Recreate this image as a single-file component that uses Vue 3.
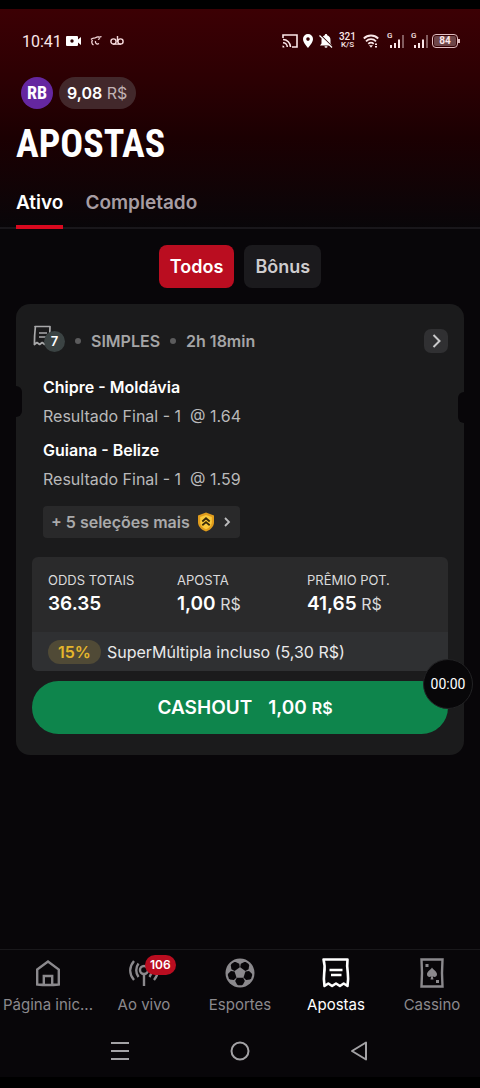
<script setup>
import { ref } from 'vue'

const tab = ref('Ativo')
const filter = ref('Todos')
const tabs = ['Ativo', 'Completado']
const filters = ['Todos', 'Bônus']

const selections = [
  { match: 'Chipre - Moldávia', market: 'Resultado Final - 1', odds: '1.64' },
  { match: 'Guiana - Belize', market: 'Resultado Final - 1', odds: '1.59' }
]
const totals = [
  { label: 'ODDS TOTAIS', value: '36.35', unit: '' },
  { label: 'APOSTA', value: '1,00', unit: 'R$' },
  { label: 'PRÊMIO POT.', value: '41,65', unit: 'R$' }
]
const nav = [
  { id: 'home', label: 'Página inic...' },
  { id: 'live', label: 'Ao vivo', badge: 106 },
  { id: 'sports', label: 'Esportes' },
  { id: 'bets', label: 'Apostas', active: true },
  { id: 'casino', label: 'Cassino' }
]
const patches = [36, 108, 180, 252, 324]
</script>

<template>
  <div class="screen">
    <div class="status">
      <span class="clock">10:41</span>
      <svg width="16" height="12" viewBox="0 0 16 12"><path fill="#fff" d="M1 1h10a1 1 0 0 1 1 1v2.500l3-2.500v8l-3-2.500V10a1 1 0 0 1-1 1H1a1 1 0 0 1-1-1V2a1 1 0 0 1 1-1z" /><circle cx="6" cy="6" r="1.700" fill="#2c0003" /></svg>
      <svg class="gap-l" width="12" height="12" viewBox="0 0 12 12" fill="none" stroke="#f6d9dc" stroke-width="1.300"><path d="M1 4.500C3 2 4 4 6 2.500S9 3 11.500 1.500M2.500 5c-1.500 2-.5 4 1 5M5.500 6c-.5 2 1 4 3.500 2.500M8 4.500l2-1" /></svg>
      <svg class="gap-s" width="14" height="12" viewBox="0 0 14 12" fill="none" stroke="#f6d9dc" stroke-width="1.400"><circle cx="3.500" cy="6.500" r="2.600" /><circle cx="10.500" cy="6.500" r="2.600" /><path d="M3 9.100h8M7.500 1v6" /></svg>
      <span class="spacer"></span>
      <svg width="16" height="14" viewBox="0 0 16 14" fill="none" stroke="#fbe6e8" stroke-width="1.600"><path d="M1 4V1h14v12h-5M1 5.500a7.500 7.500 0 0 1 7.500 7.500M1 8.700A4.300 4.300 0 0 1 5.300 13" /><path d="M.5 13.500v-2a2 2 0 0 1 2 2z" fill="#fbe6e8" stroke="none" /></svg>
      <svg class="pin" width="12" height="14" viewBox="0 0 12 14"><path fill="#fff" fill-rule="evenodd" d="M6 0a5 5 0 0 1 5 5c0 3.500-5 9-5 9S1 8.500 1 5a5 5 0 0 1 5-5zm0 3.300a1.800 1.800 0 1 0 0 3.600 1.800 1.800 0 0 0 0-3.600z" /></svg>
      <svg class="bell" width="14" height="14" viewBox="0 0 14 14"><path fill="#fff" d="M7 0c.7 0 1.200.5 1.200 1.200C10.300 1.800 11.500 3.600 11.500 6v3.500l1.500 2H1l1.500-2V6c0-2.400 1.200-4.200 3.300-4.800C5.800.5 6.300 0 7 0zM5.500 12.300h3a1.500 1.500 0 0 1-3 0z" /><path d="M1.500.8l12 12" stroke="#300004" stroke-width="1.200" /><path d="M.5 1.500l12.500 12" stroke="#fff" stroke-width="1.200" /></svg>
      <span class="rate"><b>321</b><b>K/S</b></span>
      <svg class="wifi" width="16" height="14" viewBox="0 0 16 14" fill="none" stroke="#fbe6e8" stroke-width="1.800"><path d="M.8 4.500c4-4 10.400-4 14.400 0M3 7.300c2.800-2.800 7.200-2.800 10 0M5.300 9.800c1.500-1.400 3.900-1.400 5.400 0" /><path fill="#fbe6e8" stroke="none" d="M6 11.200h4l-2 2.600zM12 9.500h2v1.500h-2zM12 12h2v1.500h-2z" /></svg>
      <span v-for="n in 2" :key="n" class="signal">
        <i>G</i>
        <svg width="17" height="14" viewBox="0 0 17 14" fill="#fbe6e8"><path d="M3 11h2v3H3zM7 9h2v5H7zM11 5.500h2V14h-2z" /><path opacity=".4" d="M15 1h2v13h-2z" /></svg>
      </span>
      <span class="battery">84</span>
    </div>

    <header class="top">
      <div class="account">
        <span class="avatar">RB</span>
        <button class="balance" type="button"><b>9,08</b> R$</button>
      </div>
      <h1>APOSTAS</h1>
      <nav class="tabs">
        <button v-for="t in tabs" :key="t" type="button" :class="{ on: tab === t }" @click="tab = t">{{ t }}</button>
      </nav>
    </header>

    <main>
      <div class="filters">
        <button v-for="f in filters" :key="f" type="button" :class="{ on: filter === f }" @click="filter = f">{{ f }}</button>
      </div>

      <article class="card">
        <div class="card-head">
          <span class="slip">
            <svg width="20" height="22" viewBox="0 0 20 22" fill="none" stroke="#a9a9aa" stroke-width="1.700" stroke-linejoin="round"><path d="M3 1.500h15q-.6 9 0 18l-2.600-2-2.600 2-2.600-2-2.600 2-2.600-2-2.600 2q0-9 1-18zM7 8h8M7 12h8" /></svg>
            <span class="count">7</span>
          </span>
          <i class="dot"></i>
          <span>SIMPLES</span>
          <i class="dot"></i>
          <span>2h 18min</span>
          <button class="open" type="button" aria-label="Abrir aposta">
            <svg width="12" height="16" viewBox="0 0 12 16" fill="none" stroke="#c9c9ca" stroke-width="2"><path d="M3.500 2l6 6-6 6" /></svg>
          </button>
        </div>

        <ul class="selections">
          <li v-for="s in selections" :key="s.match">
            <h2>{{ s.match }}</h2>
            <p>{{ s.market }}&nbsp; @ {{ s.odds }}</p>
          </li>
        </ul>

        <button class="more" type="button">
          + 5 seleções mais
          <svg width="18" height="20" viewBox="0 0 18 20"><path fill="#e09c1c" d="M9 .5l8 3V10c0 4.500-3.300 7.700-8 9.500C4.300 17.700 1 14.500 1 10V3.500z" /><path fill="#fbc93b" d="M9 3l5.800 2v5c0 3.300-2.300 5.700-5.800 7.200C5.500 15.700 3.200 13.300 3.200 10V5z" /><path fill="none" stroke="#37290a" stroke-width="1.800" d="M5.300 9.500L9 6.300l3.700 3.200M5.300 13.300L9 10.100l3.700 3.200" /></svg>
          <svg width="10" height="10" viewBox="0 0 10 10" fill="none" stroke="#bcbcbd" stroke-width="1.800"><path d="M3 1l4 4-4 4" /></svg>
        </button>

        <div class="summary">
          <dl>
            <div v-for="t in totals" :key="t.label">
              <dt>{{ t.label }}</dt>
              <dd><b>{{ t.value }}</b> {{ t.unit }}</dd>
            </div>
          </dl>
          <p class="boost"><span>15%</span>SuperMúltipla incluso (5,30 R$)</p>
        </div>

        <div class="cash-wrap">
          <button class="cashout" type="button"><span>CASHOUT</span><span>1,00 <small>R$</small></span></button>
          <span class="timer">00:00</span>
        </div>
      </article>
    </main>

    <nav class="bottom">
      <a v-for="n in nav" :key="n.id" href="#" :class="{ active: n.active }">
        <span class="icon">
          <svg v-if="n.id === 'home'" width="32" height="32" viewBox="0 0 32 32" fill="none" stroke="currentColor" stroke-width="2.400"><path d="M5.200 12.500L16 4.500l10.800 8V27.500q-10.800 1-21.600 0zM11.800 28v-9h8.400v9" /></svg>
          <svg v-else-if="n.id === 'live'" width="32" height="32" viewBox="0 0 32 32" fill="none" stroke="currentColor" stroke-width="2.400"><circle cx="16" cy="13" r="4" /><path d="M16 17v12M10.500 6.500c-3 4-3 9.500 0 13.500M21.500 6.500c3 4 3 9.500 0 13.500M6 4c-5 6-5 13 0 19M26 4c5 6 5 13 0 19" /></svg>
          <svg v-else-if="n.id === 'sports'" width="32" height="32" viewBox="0 0 32 32"><circle cx="16" cy="16" r="14.500" fill="currentColor" /><path v-for="a in patches" :key="a" :transform="`rotate(${a} 16 16)`" fill="#080609" d="M12.800 11.300h6.400l1.600-3.300-1.800-3.500-1.200-.8h-3.600l-1.200.8L11.200 8z" /></svg>
          <svg v-else-if="n.id === 'bets'" width="32" height="32" viewBox="0 0 32 32" fill="none" stroke="currentColor" stroke-width="2.600" stroke-linejoin="round"><path d="M4.500 2.500h23q-.8 6 .3 13.500.8 6-.3 13l-3.800-2.500-3.800 2.500-3.900-2.500-3.900 2.500-3.800-2.500-3.800 2.500q-1.100-7-.3-13 1.100-7.500-.7-13.500zM9.500 13h13M11 18h10.500" /></svg>
          <svg v-else width="32" height="32" viewBox="0 0 32 32"><path fill="none" stroke="currentColor" stroke-width="2.400" d="M5.500 2.500h21q-1 13.500 0 27h-21q1-13.500 0-27z" /><path fill="currentColor" d="M9.500 7h3v3h-3zM20 23h3v3h-3zM16 10.500c1.500 2.500 5 4 5 6.800 0 3-3.300 3.300-4.300 1.800l.8 3.400h-3l.8-3.400c-1 1.500-4.300 1.200-4.300-1.800 0-2.800 3.500-4.300 5-6.800z" /></svg>
          <b v-if="n.badge" class="badge">{{ n.badge }}</b>
        </span>
        <span class="label">{{ n.label }}</span>
      </a>
    </nav>

    <div class="system">
      <button type="button" aria-label="Recentes"><svg width="20" height="20" viewBox="0 0 20 20" stroke="#a3a2a5" stroke-width="2"><path d="M1 2h18M1 10h18M1 18h18" /></svg></button>
      <button type="button" aria-label="Início"><svg width="20" height="20" viewBox="0 0 20 20" fill="none" stroke="#a3a2a5" stroke-width="2"><circle cx="10" cy="10" r="8.500" /></svg></button>
      <button type="button" aria-label="Voltar"><svg width="20" height="20" viewBox="0 0 20 20" fill="none" stroke="#a3a2a5" stroke-width="2" stroke-linejoin="round"><path d="M16 1.500v17L2 10z" /></svg></button>
    </div>
  </div>
</template>

<style>
body {
  margin: 0;
  background: #000;
}
</style>

<style scoped>
* {
  box-sizing: border-box;
}
.screen {
  min-height: 100vh;
  display: flex;
  flex-direction: column;
  border-top: 9px solid #000;
  border-bottom: 11px solid #000;
  background: linear-gradient(#3c0004 0, #2c0003 70px, #1b0002 130px, #080609 220px);
  color: #fff;
  font-family: Inter, "Noto Sans", sans-serif;
  font-size: 16px;
}
button {
  font: inherit;
  color: inherit;
  border: 0;
  padding: 0;
  background: none;
}
svg {
  display: block;
  flex: none;
}
h1, h2, p, ul, dl, dd {
  margin: 0;
  padding: 0;
}
.status {
  display: flex;
  align-items: center;
  height: 64px;
  padding: 0 22px;
  font-family: Roboto, sans-serif;
  color: #fbe6e8;
}
.clock {
  margin-right: 4px;
}
.gap-l,
.gap-s {
  margin-left: 8px;
}
.spacer {
  flex: 1;
}
.pin {
  margin-left: 4px;
}
.bell {
  margin-left: 5px;
}
.rate {
  display: flex;
  flex-direction: column;
  align-items: center;
  margin-left: 6px;
  line-height: 8px;
  font-size: 10px;
}
.rate b {
  font-weight: 500;
}
.rate b + b {
  font-size: 8px;
}
.wifi {
  margin: 0 8px 0 7px;
}
.signal {
  position: relative;
  margin-right: 7px;
}
.signal i {
  position: absolute;
  top: -2px;
  left: 0;
  font: 500 8px/8px Roboto, sans-serif;
}
.battery {
  position: relative;
  width: 26px;
  height: 14px;
  margin-left: -3px;
  border: 1px solid #e0bcc0;
  border-radius: 4px;
  background: #6d4548;
  background-clip: content-box;
  padding: 1px;
  font-size: 10px;
  font-weight: 700;
  line-height: 10px;
  text-align: center;
}
.battery::after {
  content: "";
  position: absolute;
  right: -3px;
  top: 4px;
  width: 2px;
  height: 4px;
  background: #e0bcc0;
}
.top {
  border-bottom: 2px solid #19171b;
}
.account {
  display: flex;
  align-items: center;
  gap: 6px;
  padding: 4px 21px 0;
}
.avatar {
  display: grid;
  place-items: center;
  width: 32px;
  height: 32px;
  border-radius: 50%;
  background: #6527a0;
  font: 700 18px/32px "Roboto Condensed", Roboto, sans-serif;
}
.balance {
  height: 32px;
  padding: 0 9px 0 8px;
  border-radius: 16px;
  background: #42282b;
  color: #c0b2b4;
}
.balance b {
  color: #fff;
  font-weight: 600;
}
h1 {
  padding: 0 16px;
  margin-top: 11px;
  font: 700 38px/48px "Roboto Condensed", Roboto, sans-serif;
}
.tabs {
  display: flex;
  gap: 22px;
  height: 57px;
  margin: 4px 16px -2px;
}
.tabs button {
  padding-top: 8px;
  border-bottom: 4px solid transparent;
  color: #a79da3;
  font-size: 19px;
  font-weight: 600;
}
.tabs .on {
  color: #fff;
  border-color: #d9091f;
}
main {
  flex: 1;
  padding: 16px;
}
.filters {
  display: flex;
  justify-content: center;
  gap: 10px;
}
.filters button {
  height: 43px;
  padding: 0 11px;
  border-radius: 8px;
  background: #1b1a1d;
  color: #ceccce;
  font-size: 18px;
  font-weight: 600;
}
.filters .on {
  background: #ba0d20;
  color: #fff;
}
.card {
  position: relative;
  margin-top: 16px;
  padding: 16px 16px 21px;
  border-radius: 14px;
  background: #1b1b1c;
}
.card::before,
.card::after {
  content: "";
  position: absolute;
  top: 82px;
  left: 0;
  width: 6px;
  height: 31px;
  border-radius: 0 6px 6px 0;
  background: #080609;
}
.card::after {
  top: 88px;
  left: auto;
  right: 0;
  border-radius: 6px 0 0 6px;
}
.card-head {
  display: flex;
  align-items: center;
  gap: 10px;
  height: 42px;
  color: #a5a5a6;
  font-weight: 600;
}
.slip {
  position: relative;
  width: 33px;
  height: 32px;
}
.count {
  position: absolute;
  left: 12px;
  bottom: 5px;
  width: 21px;
  height: 21px;
  border-radius: 50%;
  background: #3b4343;
  color: #fff;
  font-size: 13px;
  line-height: 21px;
  text-align: center;
}
.dot {
  width: 6px;
  height: 6px;
  border-radius: 50%;
  background: #5c5c5d;
}
.open {
  display: grid;
  place-items: center;
  width: 24px;
  height: 24px;
  margin-left: auto;
  border-radius: 7px;
  background: #303032;
}
.selections {
  list-style: none;
  margin: 10px 11px 0;
}
.selections li {
  height: 63px;
}
h2 {
  font-size: 16px;
  font-weight: 600;
  line-height: 30px;
}
.selections p {
  color: #b9b9ba;
  line-height: 28px;
}
.more {
  display: flex;
  align-items: center;
  gap: 7px;
  height: 32px;
  margin: 8px 11px 0;
  padding: 0 8px;
  border-radius: 4px;
  background: #29292a;
  color: #aaaaab;
  font-weight: 600;
}
.summary {
  margin-top: 19px;
  border-radius: 6px;
  overflow: hidden;
  background: #2a2a2b;
}
dl {
  display: grid;
  grid-template-columns: 129px 130px 1fr;
  height: 75px;
  padding: 13px 16px 0;
}
dt {
  font-size: 13px;
  line-height: 20px;
  color: #dadadb;
}
dd {
  line-height: 28px;
  color: #dadadb;
}
dd b {
  color: #fff;
  font-size: 19px;
  font-weight: 600;
}
.boost {
  display: flex;
  align-items: center;
  gap: 6px;
  height: 39px;
  padding: 0 16px;
  background: #2f3032;
  color: #e9e9ea;
}
.boost span {
  padding: 0 10px;
  border-radius: 12px;
  background: #504a36;
  color: #e5b62c;
  font-weight: 600;
  line-height: 24px;
}
.cash-wrap {
  position: relative;
  margin-top: 10px;
}
.cashout {
  display: flex;
  align-items: center;
  justify-content: center;
  gap: 16px;
  width: 100%;
  height: 53px;
  padding-left: 10px;
  border-radius: 27px;
  background: #0e854c;
  font-size: 19px;
  font-weight: 600;
}
.cashout small {
  font-size: 16px;
}
.timer {
  position: absolute;
  right: -25px;
  top: -22px;
  width: 50px;
  height: 50px;
  border: 1px solid #222224;
  border-radius: 50%;
  background: #080709;
  font: 14px/48px Roboto, sans-serif;
  text-align: center;
}
.bottom {
  display: grid;
  grid-template-columns: repeat(5, minmax(0, 1fr));
  height: 75px;
  border-top: 1px solid #19181b;
}
.bottom a {
  display: flex;
  flex-direction: column;
  align-items: center;
  padding: 7px 2px 0;
  color: #8b898d;
  font-size: 15px;
  text-decoration: none;
}
.bottom .active {
  color: #fff;
}
.icon {
  position: relative;
}
.badge {
  position: absolute;
  left: 17px;
  top: -2px;
  padding: 0 5px;
  border-radius: 10px;
  background: #b90d20;
  color: #fff;
  font-size: 12px;
  font-weight: 600;
  line-height: 20px;
}
.label {
  white-space: nowrap;
  line-height: 32px;
}
.system {
  display: flex;
  justify-content: center;
  gap: 100px;
  height: 53px;
}
</style>
